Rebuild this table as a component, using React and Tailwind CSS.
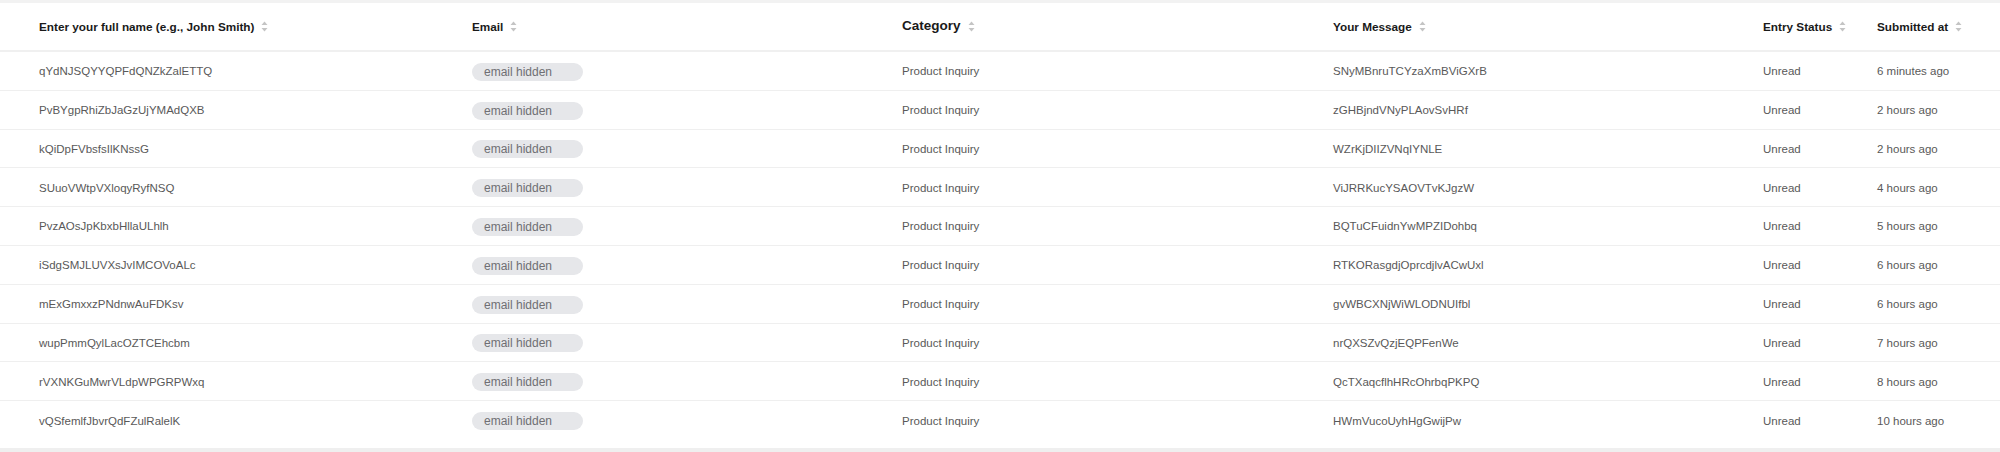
import React from 'react';

const ROWS = [
  { name: 'qYdNJSQYYQPFdQNZkZalETTQ', message: 'SNyMBnruTCYzaXmBViGXrB', time: '6 minutes ago' },
  { name: 'PvBYgpRhiZbJaGzUjYMAdQXB', message: 'zGHBjndVNyPLAovSvHRf', time: '2 hours ago' },
  { name: 'kQiDpFVbsfsIlKNssG', message: 'WZrKjDIIZVNqIYNLE', time: '2 hours ago' },
  { name: 'SUuoVWtpVXloqyRyfNSQ', message: 'ViJRRKucYSAOVTvKJgzW', time: '4 hours ago' },
  { name: 'PvzAOsJpKbxbHllaULhlh', message: 'BQTuCFuidnYwMPZIDohbq', time: '5 hours ago' },
  { name: 'iSdgSMJLUVXsJvIMCOVoALc', message: 'RTKORasgdjOprcdjlvACwUxl', time: '6 hours ago' },
  { name: 'mExGmxxzPNdnwAuFDKsv', message: 'gvWBCXNjWiWLODNUIfbl', time: '6 hours ago' },
  { name: 'wupPmmQylLacOZTCEhcbm', message: 'nrQXSZvQzjEQPFenWe', time: '7 hours ago' },
  { name: 'rVXNKGuMwrVLdpWPGRPWxq', message: 'QcTXaqcflhHRcOhrbqPKPQ', time: '8 hours ago' },
  { name: 'vQSfemlfJbvrQdFZulRalelK', message: 'HWmVucoUyhHgGwijPw', time: '10 hours ago' },
];

const COLS = 'grid grid-cols-[433px_430px_431px_430px_114px_1fr] pl-[39px]';

function SortIcon() {
  return (
    <svg width="7" height="11" viewBox="0 0 7 11" className="shrink-0">
      <path d="M3.5 0.5 L6.5 4 L0.5 4 Z" fill="#c4c4c4" />
      <path d="M3.5 10.5 L6.5 7 L0.5 7 Z" fill="#c4c4c4" />
    </svg>
  );
}

function Head({ children, big }) {
  return (
    <div className="flex items-center gap-[7px]">
      <span className={big ? 'text-[13.5px] font-bold text-[#1a1a1a]' : 'text-[11.75px] font-bold text-[#1a1a1a]'}>{children}</span>
      <SortIcon />
    </div>
  );
}

export default function App() {
  return (
    <div className="w-[2000px] h-[452px] bg-white font-['Liberation_Sans',Arial,sans-serif] flex flex-col">
      <div className="h-[3px] bg-[#f2f2f2]" />
      <div className={`${COLS} h-[49px] items-center border-b-2 border-[#f0f0f0]`}>
        <Head>Enter your full name (e.g., John Smith)</Head>
        <Head>Email</Head>
        <Head big>Category</Head>
        <Head>Your Message</Head>
        <Head>Entry Status</Head>
        <Head>Submitted at</Head>
      </div>
      {ROWS.map((r, i) => (
        <div key={i} className={`${COLS} h-[38.8px] pt-[2px] items-center text-[11.5px] text-[#595959] ${i < ROWS.length - 1 ? 'border-b border-[#efefef]' : ''}`}>
          <div>{r.name}</div>
          <div>
            <span className="inline-flex items-center w-[111px] h-[18px] px-3 rounded-full bg-[#e6e7ea] text-[#6f6f73] text-[12px]">email hidden</span>
          </div>
          <div>Product Inquiry</div>
          <div>{r.message}</div>
          <div>Unread</div>
          <div>{r.time}</div>
        </div>
      ))}
      <div className="flex-1" />
      <div className="h-[4px] bg-[#efefef]" />
    </div>
  );
}
